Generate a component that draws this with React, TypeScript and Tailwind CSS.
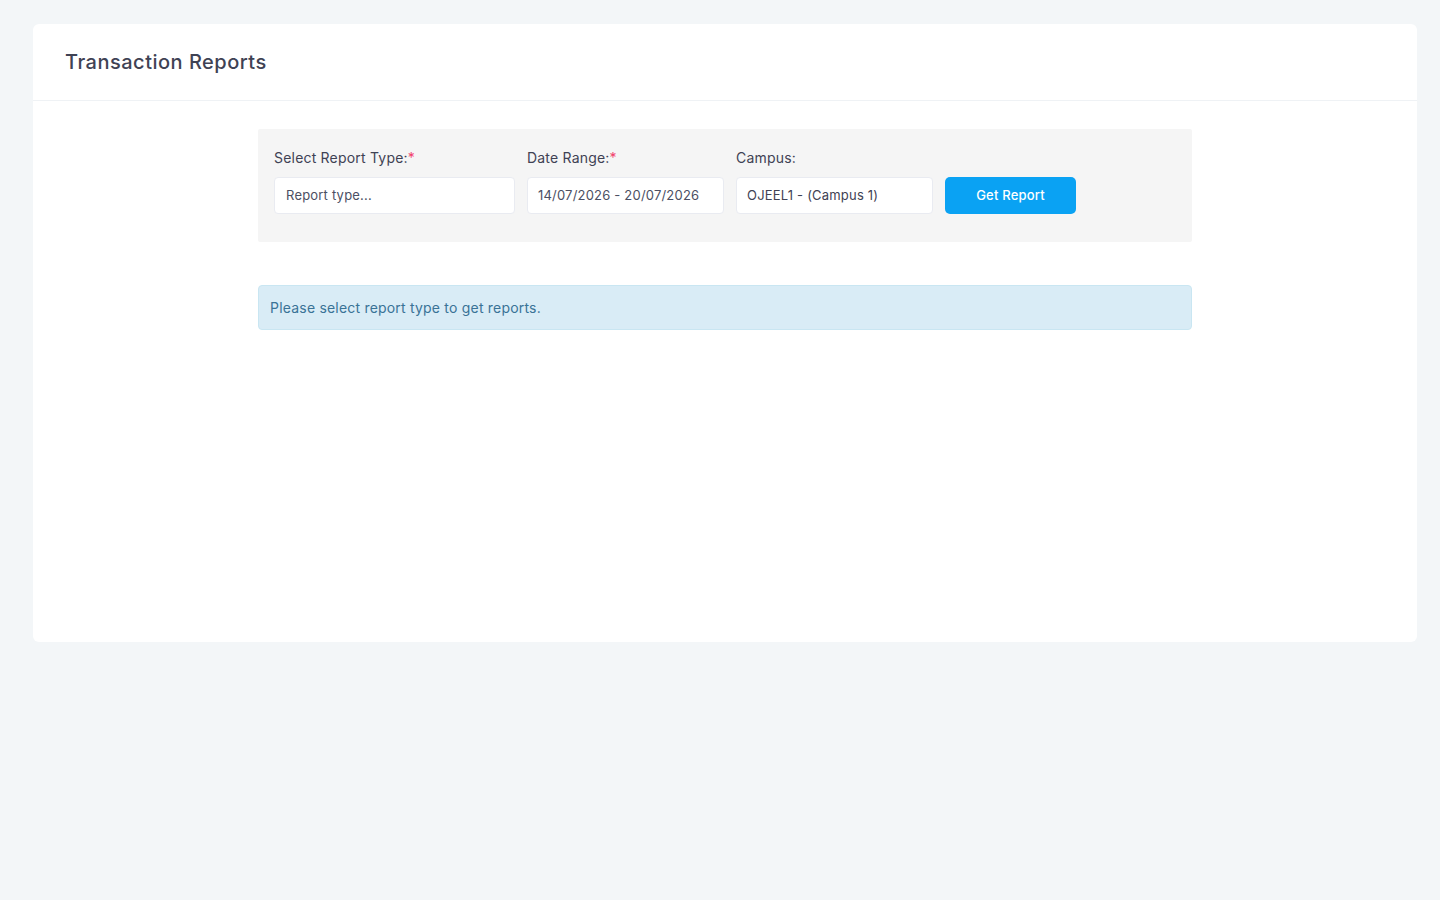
import React from "react";

export default function App() {
  return (
    <div
      className="min-h-[900px] w-full bg-[#f3f6f8] pt-[24px] pl-[33px] pr-[23px] pb-[23px]"
      style={{ fontFamily: "Inter, 'Noto Sans', sans-serif" }}
    >
      <div className="bg-white rounded-[6px] h-[618px] flex flex-col">
        <div className="h-[77px] border-b border-[#eff2f5] flex items-center px-[32px]">
          <h1 className="text-[20px] font-medium text-[#3f4254] tracking-[0.5px]">Transaction Reports</h1>
        </div>
        <div className="pt-[28px]">
          <div className="w-[934px] mx-auto bg-[#f5f5f5] rounded-[2px] pt-[19px] pb-[28px] px-[16px]">
            <div className="flex gap-[12px] items-end tracking-[0.2px]">
              <div className="flex flex-col w-[241px]">
                <label className="text-[14px] text-[#3f4254] leading-[20px] mb-[9px]">
                  Select Report Type:<span className="text-[#f1416c]">*</span>
                </label>
                <div className="h-[37px] bg-white border border-[#e9ebf1] rounded-[4px] flex items-center px-[11px] text-[13px] text-[#4b4f63]">
                  Report type...
                </div>
              </div>
              <div className="flex flex-col w-[197px]">
                <label className="text-[14px] text-[#3f4254] leading-[20px] mb-[9px]">
                  Date Range:<span className="text-[#f1416c]">*</span>
                </label>
                <div className="h-[37px] bg-white border border-[#e9ebf1] rounded-[4px] flex items-center px-[10px] text-[13px] text-[#4b4f63]">
                  14/07/2026 - 20/07/2026
                </div>
              </div>
              <div className="flex flex-col w-[197px]">
                <label className="text-[14px] text-[#3f4254] leading-[20px] mb-[9px]">Campus:</label>
                <div className="h-[37px] bg-white border border-[#e9ebf1] rounded-[4px] flex items-center px-[10px] text-[13px] text-[#3f4254]">
                  OJEEL1 - (Campus 1)
                </div>
              </div>
              <button className="h-[37px] w-[131px] bg-[#0aa2f3] text-white text-[13px] font-medium rounded-[5px]">
                Get Report
              </button>
            </div>
          </div>
          <div className="w-[934px] mx-auto mt-[43px] h-[45px] bg-[#d9ecf6] border border-[#c9e6f2] rounded-[4px] flex items-center px-[11px] text-[14px] text-[#3a7396] tracking-[0.2px]">
            Please select report type to get reports.
          </div>
        </div>
      </div>
    </div>
  );
}
